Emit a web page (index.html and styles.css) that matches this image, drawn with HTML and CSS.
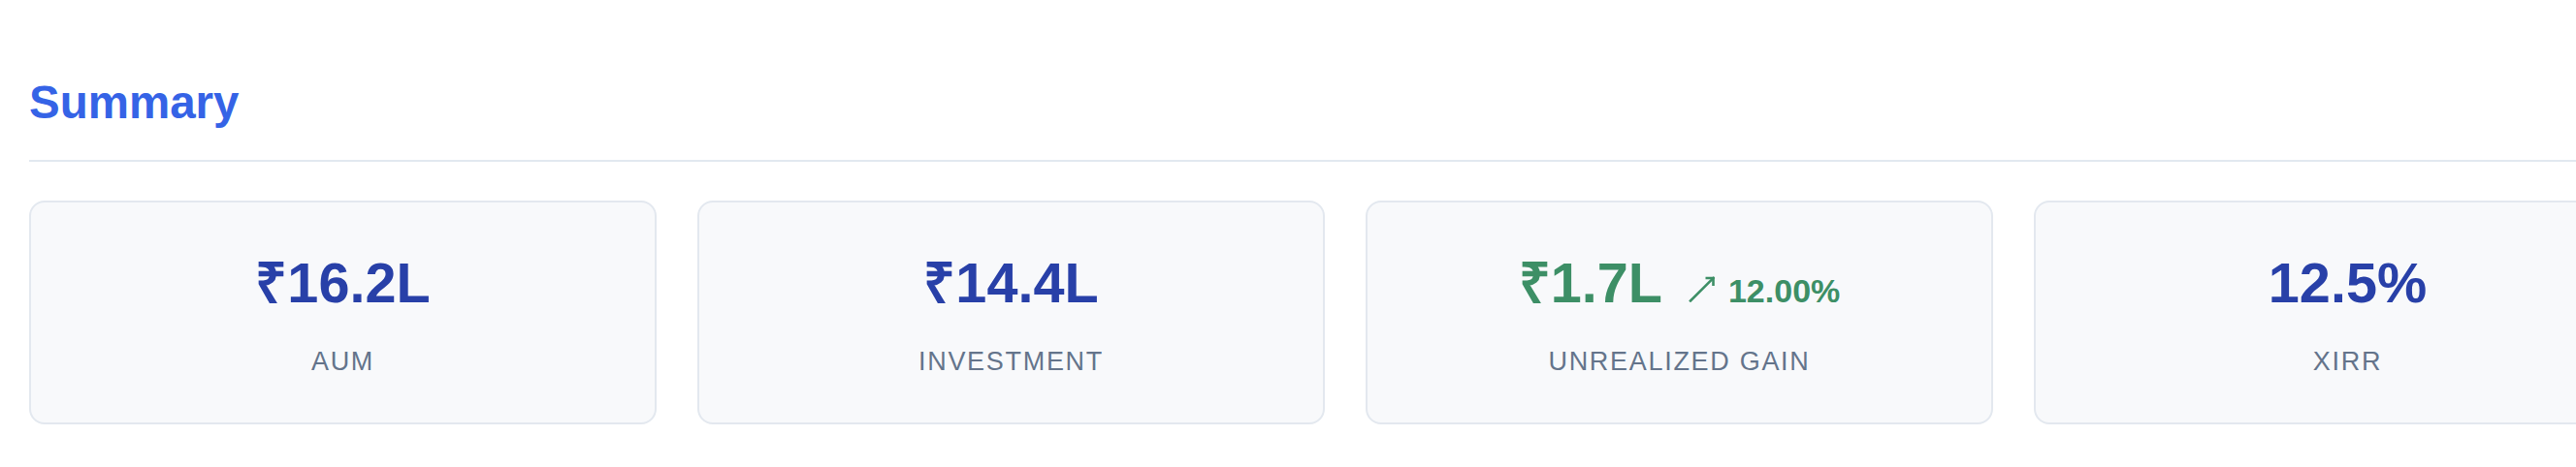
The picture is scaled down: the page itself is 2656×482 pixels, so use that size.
FILE: index.html
```html
<!DOCTYPE html>
<html lang="en">
<head>
<meta charset="utf-8">
<title>Summary</title>
<link rel="stylesheet" href="styles.css">
</head>
<body>
<main class="page">
  <section class="summary">
    <h2 class="summary-title">Summary</h2>
    <div class="cards">
      <div class="card">
        <div class="value-row"><span class="value">₹16.2L</span></div>
        <div class="label">AUM</div>
      </div>
      <div class="card">
        <div class="value-row"><span class="value">₹14.4L</span></div>
        <div class="label">INVESTMENT</div>
      </div>
      <div class="card">
        <div class="value-row">
          <span class="value value-gain">₹1.7L</span>
          <span class="change">
            <svg class="change-icon" width="28" height="28" viewBox="0 0 28 28" aria-hidden="true">
              <path d="M2 26.5 L25.5 3" fill="none" stroke="currentColor" stroke-width="2.6" stroke-linecap="square"/>
              <path d="M17.5 3 L25.5 3 L25.5 11" fill="none" stroke="currentColor" stroke-width="2.6" stroke-linecap="butt" stroke-linejoin="miter"/>
            </svg>
            <span class="change-text">12.00%</span>
          </span>
        </div>
        <div class="label">UNREALIZED GAIN</div>
      </div>
      <div class="card">
        <div class="value-row"><span class="value">12.5%</span></div>
        <div class="label">XIRR</div>
      </div>
    </div>
  </section>
</main>
</body>
</html>
```
FILE: styles.css
```css
html, body {
  margin: 0;
  padding: 0;
  background: #ffffff;
  overflow: hidden;
}

body {
  font-family: "Liberation Sans", Arial, sans-serif;
}

.page {
  padding: 78px 0 0 30px;
}

.summary-title {
  margin: 0;
  padding-bottom: 32px;
  border-bottom: 2px solid #e2e8f0;
  font-size: 47.5px;
  font-weight: 700;
  line-height: normal;
  color: #3563e6;
}

.cards {
  display: flex;
  gap: 42px;
  margin-top: 40px;
}

.card {
  flex: 0 0 647px;
  box-sizing: border-box;
  height: 231px;
  border: 2px solid #e3e8ef;
  border-radius: 16px;
  background: #f8f9fb;
  padding-top: 51px;
  display: flex;
  flex-direction: column;
  align-items: center;
}

.value-row {
  display: flex;
  align-items: baseline;
  justify-content: center;
  height: 64px;
  line-height: 64px;
}

.value {
  font-size: 57.6px;
  font-weight: 700;
  line-height: 64px;
  color: #2840a8;
}

.value-gain {
  color: #3d8f66;
}

.change {
  display: inline-flex;
  align-items: baseline;
  margin-left: 27px;
  line-height: 40px;
  color: #3d8f66;
}

.change-icon {
  display: block;
  width: 28px;
  height: 28px;
  margin-right: 13px;
}

.change-text {
  font-size: 34px;
  font-weight: 700;
}

.label {
  margin-top: 34px;
  font-size: 27px;
  letter-spacing: 1.7px;
  line-height: 31px;
  color: #64748b;
}
```
